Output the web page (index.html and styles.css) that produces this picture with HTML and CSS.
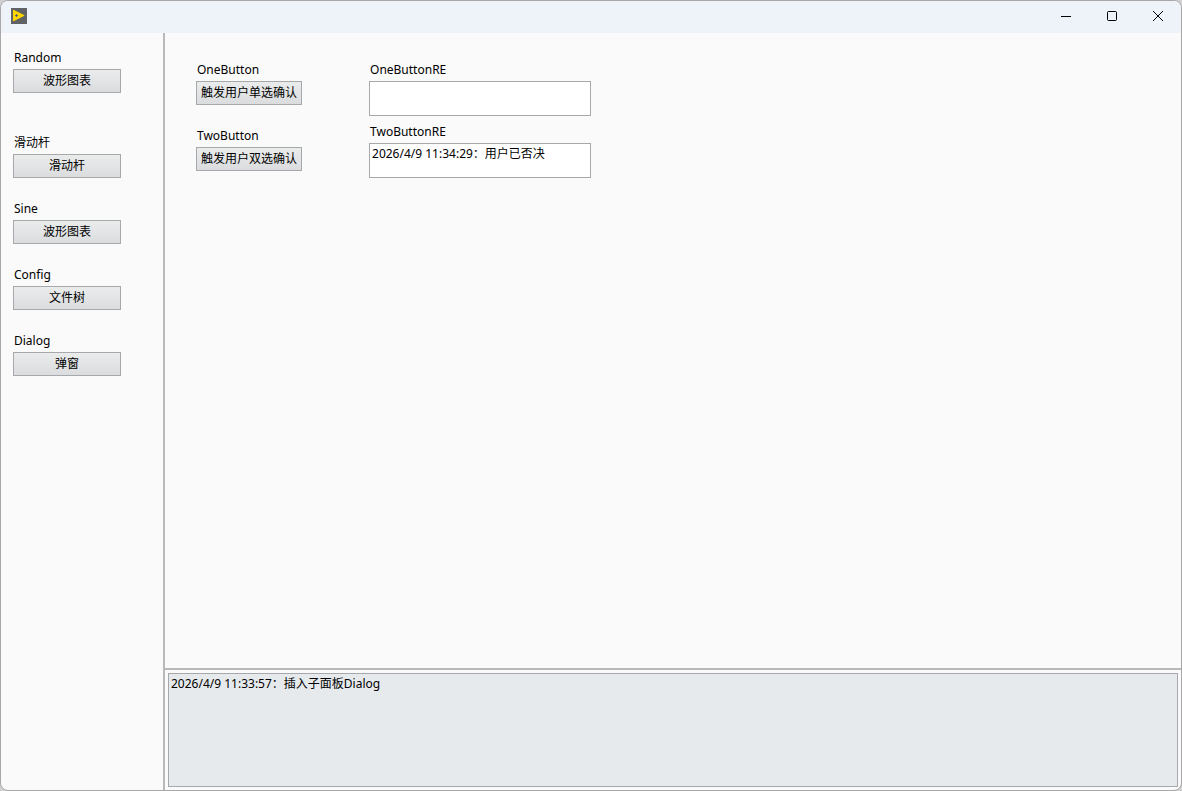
FILE: index.html
```html
<!DOCTYPE html>
<html lang="zh-CN">
<head>
  <meta charset="UTF-8">
  <meta name="viewport" content="width=device-width, initial-scale=1.0">
  <title>Dialog</title>
  <link rel="stylesheet" href="styles.css">
</head>
<body>
  <div class="window">
    <!-- Title Bar -->
    <header class="title-bar">
      <svg class="app-icon" width="16" height="16" viewBox="0 0 16 16">
        <rect width="16" height="16" fill="#606266"/>
        <path d="M2 2.6 Q2 1.4 3 1.9 L13 7 Q13.9 7.5 13 8 L3 13.1 Q2 13.6 2 12.4z" fill="#ffd500"/>
        <path d="M4 7.5h3M5.5 6v3" stroke="#606266" stroke-width="1"/>
      </svg>
      <div class="window-controls">
        <button type="button" class="control" aria-label="最小化">
          <svg width="12" height="12" viewBox="0 0 12 12"><path d="M1 6.5h10" stroke="#000" fill="none"/></svg>
        </button>
        <button type="button" class="control" aria-label="最大化">
          <svg width="12" height="12" viewBox="0 0 12 12"><rect x="1.5" y="1.5" width="9" height="9" rx="1" stroke="#000" fill="none"/></svg>
        </button>
        <button type="button" class="control" aria-label="关闭">
          <svg width="12" height="12" viewBox="0 0 12 12"><path d="M1 1l10 10M11 1L1 11" stroke="#000" fill="none"/></svg>
        </button>
      </div>
    </header>

    <div class="content">
      <!-- Left Panel with navigation buttons -->
      <nav class="left-panel">
        <div class="item item-first">
          <label for="random">Random</label>
          <button type="button" class="button" id="random">波形图表</button>
        </div>
        <div class="item">
          <label for="slider">滑动杆</label>
          <button type="button" class="button" id="slider">滑动杆</button>
        </div>
        <div class="item">
          <label for="sine">Sine</label>
          <button type="button" class="button" id="sine">波形图表</button>
        </div>
        <div class="item">
          <label for="config">Config</label>
          <button type="button" class="button" id="config">文件树</button>
        </div>
        <div class="item">
          <label for="dialog">Dialog</label>
          <button type="button" class="button" id="dialog">弹窗</button>
        </div>
      </nav>

      <div class="right-panel">
        <!-- Dialog sub panel -->
        <main class="sub-panel">
          <div class="triggers">
            <div class="item">
              <label for="oneButton">OneButton</label>
              <button type="button" class="button" id="oneButton">触发用户单选确认</button>
            </div>
            <div class="item">
              <label for="twoButton">TwoButton</label>
              <button type="button" class="button" id="twoButton">触发用户双选确认</button>
            </div>
          </div>
          <div class="results">
            <div class="item">
              <label for="oneButtonRE">OneButtonRE</label>
              <textarea class="text-box" id="oneButtonRE" readonly></textarea>
            </div>
            <div class="item">
              <label for="twoButtonRE">TwoButtonRE</label>
              <textarea class="text-box" id="twoButtonRE" readonly>2026/4/9 11:34:29：用户已否决</textarea>
            </div>
          </div>
        </main>

        <!-- Log -->
        <div class="log-panel">
          <textarea class="text-box log" aria-label="日志" readonly>2026/4/9 11:33:57：插入子面板Dialog</textarea>
        </div>
      </div>
    </div>
  </div>
</body>
</html>
```
FILE: styles.css
```css
* {
  margin: 0;
  padding: 0;
  box-sizing: border-box;
}

body {
  height: 100vh;
  background-color: #d0d0d0;
  color: #000;
}

body, button, textarea {
  font-family: "Noto Sans", "Noto Sans CJK SC", sans-serif;
  font-size: 12px;
  line-height: 18px;
}

.window {
  display: flex;
  flex-direction: column;
  height: 100vh;
  overflow: hidden;
  background-color: #fafafa;
  border: 1px solid #a8a8a8;
  border-radius: 8px;
}

/* Title Bar */
.title-bar {
  display: flex;
  justify-content: space-between;
  align-items: center;
  height: 32px;
  padding: 0 0 2px 10px;
  background-color: #eef3fa;
}

.app-icon {
  display: block;
}

.window-controls {
  display: flex;
  height: 100%;
}

.control {
  display: flex;
  align-items: center;
  justify-content: center;
  width: 46px;
  border: none;
  background: none;
}

.control:hover {
  background-color: #dde3ea;
}

/* Panels */
.content {
  display: flex;
  flex: 1;
  min-height: 0;
}

.left-panel {
  display: flex;
  flex-direction: column;
  gap: 22px;
  width: 164px;
  padding: 16px 12px;
  border-right: 2px solid #b9b9b9;
}

.right-panel {
  display: flex;
  flex: 1;
  flex-direction: column;
  min-width: 0;
}

.sub-panel {
  display: flex;
  flex: 1;
  gap: 67px;
  padding: 28px 31px;
}

.triggers {
  display: flex;
  flex-direction: column;
  gap: 22px;
}

.results {
  display: flex;
  flex-direction: column;
  gap: 7px;
  width: 222px;
}

.item {
  display: flex;
  flex-direction: column;
  align-items: flex-start;
  gap: 2px;
}

.item-first {
  margin-bottom: 19px;
}

.item label {
  padding-left: 1px;
}

.button {
  height: 24px;
  padding: 0 4px;
  border: 1px solid #a6a8ab;
  background: linear-gradient(#eaecec, #dadcde);
  color: #000;
  white-space: nowrap;
}

.left-panel .button {
  width: 108px;
}

.button:active {
  background: #d0d3d6;
}

.text-box {
  display: block;
  width: 100%;
  height: 35px;
  padding: 1px 2px;
  border: 1px solid #a6a8ab;
  background-color: #fff;
  color: #000;
  outline: none;
  resize: none;
}

/* Log */
.log-panel {
  padding: 3px;
  border-top: 2px solid #b9b9b9;
}

.log {
  height: 114px;
  background-color: #e6eaed;
}
```
